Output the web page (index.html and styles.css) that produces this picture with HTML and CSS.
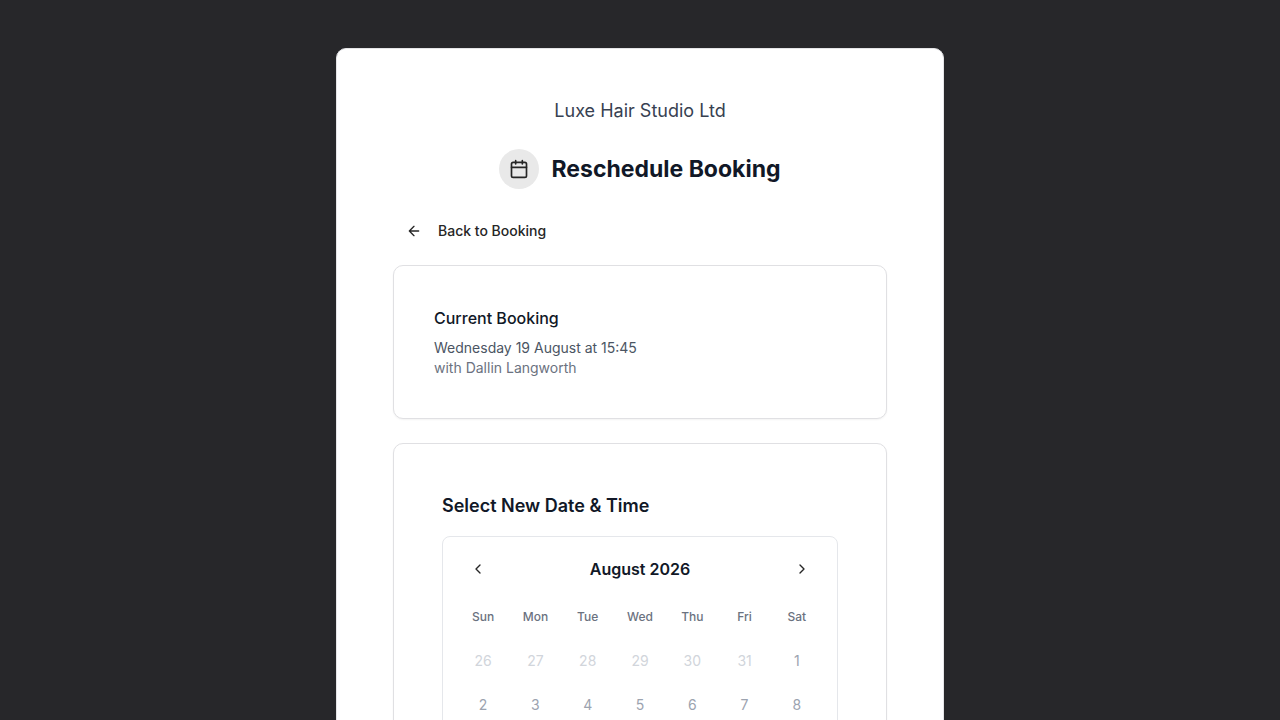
FILE: index.html
```html
<!DOCTYPE html>
<html lang="en">
<head>
<meta charset="utf-8">
<meta name="viewport" content="width=device-width, initial-scale=1">
<title>Reschedule Booking</title>
<link rel="stylesheet" href="styles.css">
</head>
<body>
<main class="panel">
  <header class="header">
    <p class="business">Luxe Hair Studio Ltd</p>
    <div class="title-row">
      <span class="title-icon">
        <svg class="icon icon-md" viewBox="0 0 24 24" aria-hidden="true"><path d="M8 2v4M16 2v4M3 10h18"/><rect x="3" y="4" width="18" height="18" rx="2"/></svg>
      </span>
      <h1 class="title">Reschedule Booking</h1>
    </div>
  </header>
  <button class="back" type="button">
    <svg class="icon icon-sm" viewBox="0 0 24 24" aria-hidden="true"><path d="m12 19-7-7 7-7M19 12H5"/></svg>
    Back to Booking
  </button>
  <section class="card current">
    <h2 class="current-title">Current Booking</h2>
    <p class="current-time">Wednesday 19 August at 15:45</p>
    <p class="current-staff">with Dallin Langworth</p>
  </section>
  <section class="card picker">
    <h2 class="picker-title">Select New Date &amp; Time</h2>
    <div class="calendar">
      <div class="calendar-head">
        <button class="nav" type="button" aria-label="Previous month"><svg class="icon icon-sm" viewBox="0 0 24 24" aria-hidden="true"><path d="m15 18-6-6 6-6"/></svg></button>
        <h3 class="month">August 2026</h3>
        <button class="nav" type="button" aria-label="Next month"><svg class="icon icon-sm" viewBox="0 0 24 24" aria-hidden="true"><path d="m9 18 6-6-6-6"/></svg></button>
      </div>
      <div class="grid weekdays">
        <span class="weekday">Sun</span><span class="weekday">Mon</span><span class="weekday">Tue</span><span class="weekday">Wed</span><span class="weekday">Thu</span><span class="weekday">Fri</span><span class="weekday">Sat</span>
      </div>
      <div class="grid">
        <button class="day outside" type="button" disabled>26</button>
        <button class="day outside" type="button" disabled>27</button>
        <button class="day outside" type="button" disabled>28</button>
        <button class="day outside" type="button" disabled>29</button>
        <button class="day outside" type="button" disabled>30</button>
        <button class="day outside" type="button" disabled>31</button>
        <button class="day" type="button" disabled>1</button>
        <button class="day" type="button" disabled>2</button>
        <button class="day" type="button" disabled>3</button>
        <button class="day" type="button" disabled>4</button>
        <button class="day" type="button" disabled>5</button>
        <button class="day" type="button" disabled>6</button>
        <button class="day" type="button" disabled>7</button>
        <button class="day" type="button" disabled>8</button>
      </div>
    </div>
  </section>
</main>
</body>
</html>
```
FILE: styles.css
```css
*, *::before, *::after {
  box-sizing: border-box;
}

body {
  margin: 0;
  padding: 48px 16px;
  background: #27272a;
  color: #111827;
  font-family: Inter, "Liberation Sans", sans-serif;
  font-size: 14px;
  line-height: 20px;
}

h1, h2, h3, p {
  margin: 0;
}

button {
  padding: 0;
  border: 0;
  background: none;
  color: inherit;
  font: inherit;
}

.icon {
  flex: none;
  fill: none;
  stroke: currentColor;
  stroke-width: 2;
  stroke-linecap: round;
  stroke-linejoin: round;
}

.icon-sm {
  width: 16px;
  height: 16px;
}

.icon-md {
  width: 20px;
  height: 20px;
}

.panel {
  max-width: 608px;
  margin: 0 auto;
  padding: 48px 56px;
  border: 1px solid #e4e4e7;
  border-radius: 10px;
  background: #fff;
}

.header {
  display: flex;
  flex-direction: column;
  align-items: center;
  gap: 24px;
  margin-bottom: 24px;
}

.business {
  color: #374151;
  font-size: 18px;
  line-height: 28px;
}

.title-row {
  display: flex;
  align-items: center;
  gap: 12px;
}

.title-icon {
  display: flex;
  align-items: center;
  justify-content: center;
  width: 40px;
  height: 40px;
  border-radius: 50%;
  background: #e9e9e9;
  color: #262626;
}

.title {
  font-size: 23px;
  font-weight: 700;
  line-height: 32px;
}

.back {
  display: flex;
  align-items: center;
  gap: 16px;
  height: 36px;
  margin-bottom: 16px;
  padding: 0 12px;
  border: 1px solid transparent;
  border-radius: 6px;
  color: #262626;
  font-weight: 500;
}

.card {
  border: 1px solid #e0e0e3;
  border-radius: 10px;
  background: #fff;
  box-shadow: 0 1px 2px rgba(0, 0, 0, 0.05);
}

.current {
  margin-bottom: 24px;
  padding: 40px;
}

.current-title {
  margin-bottom: 8px;
  font-size: 16px;
  font-weight: 500;
  line-height: 24px;
}

.current-time {
  color: #4b5563;
}

.current-staff {
  color: #6b7280;
}

.picker {
  padding: 48px;
}

.picker-title {
  margin-bottom: 16px;
  font-size: 18px;
  font-weight: 600;
  line-height: 28px;
}

.calendar {
  padding: 16px;
  border: 1px solid #e5e7eb;
  border-radius: 8px;
}

.calendar-head {
  display: flex;
  align-items: center;
  justify-content: space-between;
  margin-bottom: 16px;
}

.nav {
  display: flex;
  align-items: center;
  justify-content: center;
  width: 38px;
  height: 32px;
  border-radius: 6px;
  color: #262626;
}

.month {
  font-size: 16px;
  font-weight: 600;
  line-height: 24px;
}

.grid {
  display: grid;
  grid-template-columns: repeat(7, 1fr);
  gap: 4px;
}

.weekdays {
  margin-bottom: 8px;
}

.weekday {
  padding: 8px 0;
  color: #6b7280;
  font-size: 12px;
  font-weight: 500;
  line-height: 16px;
  text-align: center;
}

.day {
  height: 40px;
  border-radius: 6px;
  color: #9ca3af;
}

.outside {
  color: #d1d5db;
}
```
